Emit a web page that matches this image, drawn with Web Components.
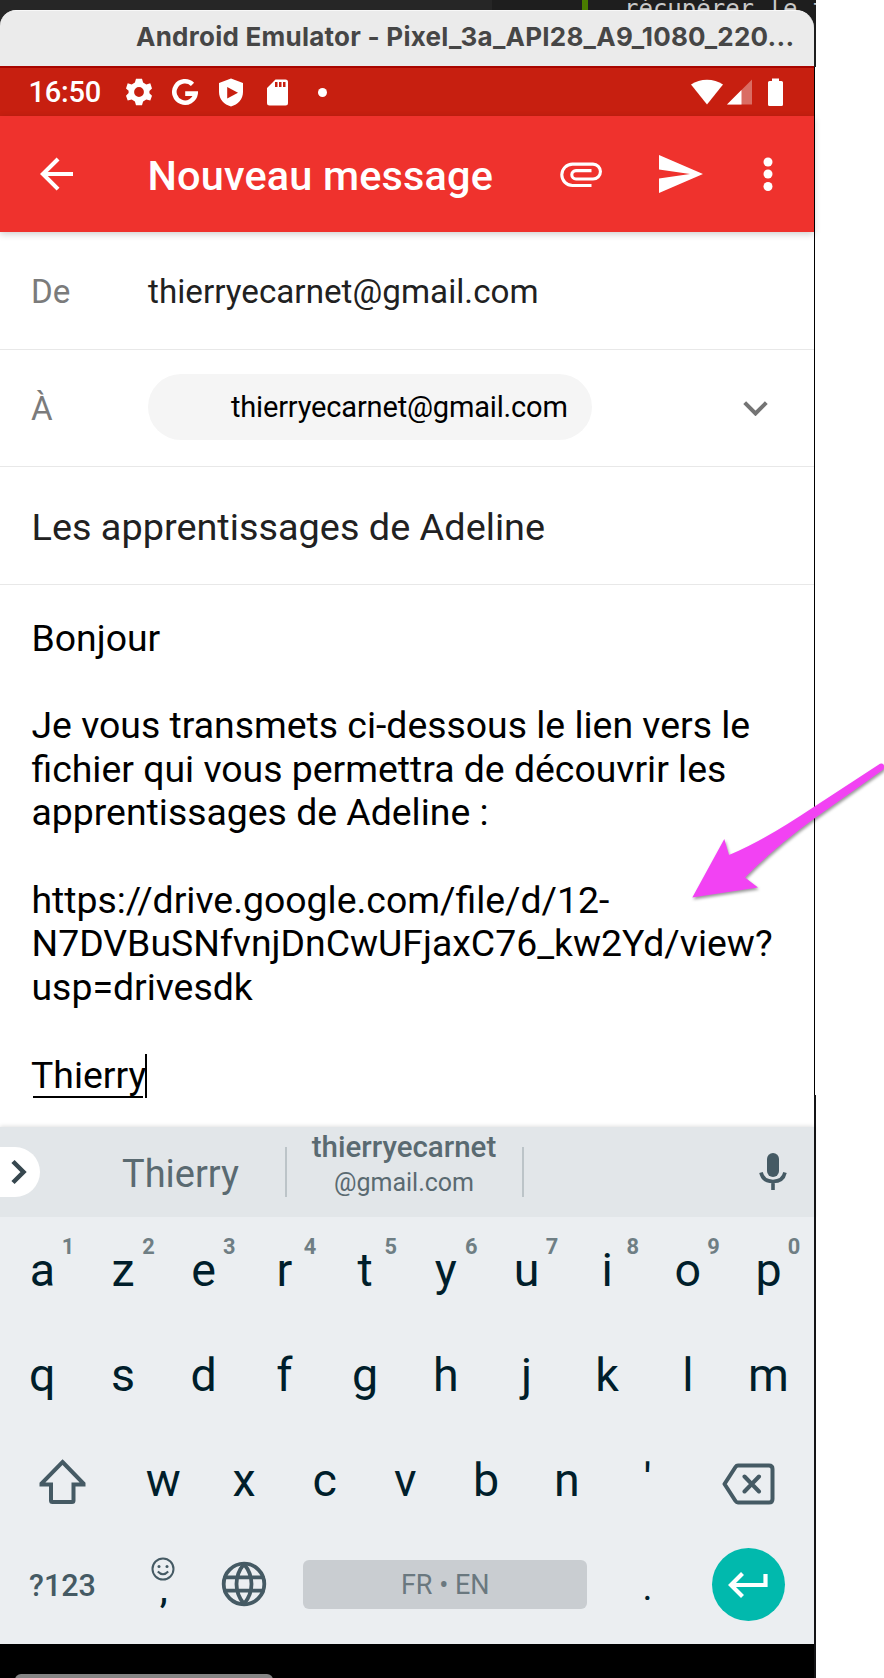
<!DOCTYPE html>
<html lang="fr">
<head>
<meta charset="utf-8">
<title>Nouveau message</title>
<style>
html,body{margin:0;background:#fff}
body{width:884px;height:1678px;overflow:hidden;font-family:Roboto,"Liberation Sans",sans-serif;position:relative}
</style>
</head>
<body>
<emulator-window></emulator-window>
<pointer-arrow></pointer-arrow>
<script>
const define = (name, html) => customElements.define(name, class extends HTMLElement {
  constructor() {
    super();
    this.attachShadow({ mode: 'open' }).innerHTML = '<style>*{box-sizing:border-box}svg{display:block;flex:none}</style>' + html;
  }
});

/* Editor strip that shows behind the window, and the window's title bar */
define('window-title', `<style>
:host{display:block;height:67px;width:816px;background:linear-gradient(90deg,#262626 492px,#1e1e1e 492px);overflow:hidden}
.behind{height:10px;display:flex;overflow:hidden;padding-left:582px}
.mark{width:6px;height:10px;background:#4a7d00;flex:none}
.code{font:24px/28px "DejaVu Sans Mono",monospace;color:#c9c9c9;white-space:pre;margin:-5px 0 0 36px}
.bar{width:814px;height:57px;background:#ebebeb;border-radius:16px 18px 0 0;border-top:1px solid #f8f8f8;padding:0 0 0 136px;font:bold 26px/51px Inter,sans-serif;letter-spacing:.25px;color:#464646;white-space:nowrap}
</style><div class="behind"><i class="mark"></i><span class="code">récupérer le f</span></div><div class="bar"><slot></slot></div>`);

define('status-bar', `<style>
:host{display:flex;width:814px;height:50px;background:#c71f10;border-top:2px solid #a80500;color:#fff;align-items:center;margin-top:-1px;padding:0 31px 0 28.5px;font-weight:500}
.t{font-size:29px;width:97.5px;letter-spacing:-.2px}
.grow{flex:1}
svg{fill:#fff}
</style><span class="t">16:50</span>
<svg width="26" height="28" viewBox="-13 -14 26 28"><path fill-rule="evenodd" d="M-3-13.3H3L4.1-9.4 7.3-7.5 11.3-8.7 13-3.6 10.4-1V1.2L13 3.8 11.3 8.6 7.3 7.5 4.1 9.4 3 13.3H-3L-4.1 9.4-7.3 7.5-11.3 8.6-13 3.8-10.4 1V-1.2L-13-3.6-11.3-8.7-7.3-7.5-4.1-9.4ZM0-4.9A4.9 4.9 0 1 0 0 4.9 4.9 4.9 0 1 0 0-4.9Z"/></svg>
<svg style="margin-left:20px" width="26" height="28" viewBox="-13 -14 26 28"><path style="fill:none;stroke:#fff;stroke-width:4.6" d="M7.5-7.7A10.7 10.7 0 1 0 10.6 1.6H0.2"/></svg>
<svg style="margin-left:21px" width="24" height="29" viewBox="0 0 24 29"><path fill-rule="evenodd" d="M12 .5L24 5V14C24 21 19 26.500 12 28.500 5 26.500 0 21 0 14V5ZM8.200 9V20.500L19 14.700Z"/></svg>
<svg style="margin-left:24px" width="21" height="27" viewBox="0 0 21 27"><path fill-rule="evenodd" d="M8.500 .5H18.500Q21 .5 21 3V24Q21 26.500 18.500 26.500H2.500Q0 26.500 0 24V9ZM8 3V8H10.500V3ZM12 3V8H14.500V3ZM16 3V8H18.500V3Z"/></svg>
<svg style="margin-left:30px" width="9" height="9"><circle cx="4.500" cy="4.500" r="4.500"/></svg>
<span class="grow"></span>
<svg width="32" height="26" viewBox="0 0 32 26"><path d="M0 5.500C9-1 23-1 32 5.500L16 25.500Z"/></svg>
<svg style="margin-left:4.5px" width="25" height="26" viewBox="0 0 25 26"><path opacity=".35" d="M25 .5V25.500H0Z"/><path d="M14.500 11V25.500H0Z"/></svg>
<svg style="margin-left:16px" width="15" height="28" viewBox="0 0 15 28"><path d="M4 .5H11V3H13.500Q15 3 15 4.500V26.500Q15 28 13.500 28H1.500Q0 28 0 26.500V4.500Q0 3 1.500 3H4Z"/></svg>`);

define('app-bar', `<style>
:host{display:flex;width:814px;height:116px;background:#ef322d;color:#fff;align-items:center;padding:0 41px 0 40px;box-shadow:0 2px 7px rgba(0,0,0,.2);position:relative}
.t{font-weight:500;font-size:41.45px;letter-spacing:.17px;flex:1;margin-left:74.5px;padding-top:4px;white-space:nowrap}
svg{fill:#fff}
</style>
<svg width="33" height="34" viewBox="0 0 33 34"><path d="M33 15V19H7.800L19.500 30.700 16.600 33.500 0 17 16.600 .5 19.500 3.400 7.800 15Z"/></svg>
<span class="t"><slot></slot></span>
<svg style="margin-top:2px" width="43" height="26" viewBox="0 0 43 26"><path fill="none" style="fill:none;stroke:#fff;stroke-width:3.100" d="M31.500 23.500H12.500A10.700 10.700 0 0 1 12.500 2.100H33A7.400 7.400 0 0 1 33 17H16A4.200 4.200 0 0 1 16 8.600H31.500"/></svg>
<svg style="margin-left:56px" width="44" height="38" viewBox="0 0 44 38"><path d="M0 0L44 19 0 38V23.500L31 19 0 14.500Z"/></svg>
<svg style="margin-left:60.5px" width="10" height="36"><circle cx="5" cy="6" r="4.500"/><circle cx="5" cy="18" r="4.500"/><circle cx="5" cy="30.500" r="4.500"/></svg>`);

define('field-row', `<style>
:host{display:flex;width:814px;height:117px;align-items:center;border-bottom:1px solid #e8e8e8;padding:0 46px 0 31px;font-size:33.16px;color:#212121}
.label{width:117px;flex:none;color:#7b7b7b}
.label,.v{padding-top:var(--drop,2px)}
.v{flex:1;display:block;letter-spacing:.04px}
</style><span class="label"><slot name="label"></slot></span><span class="v"><slot></slot></span><slot name="end"></slot>`);

define('contact-chip', `<style>
:host{display:inline-flex;width:444px;height:66px;background:#f5f5f5;border-radius:33px;align-items:center;padding-left:83px;font-size:29.02px;color:#000;vertical-align:middle;letter-spacing:-.18px;margin-top:-4px}
</style><slot></slot>`);

define('subject-line', `<style>
:host{display:flex;width:814px;height:118px;align-items:center;border-bottom:1px solid #e8e8e8;padding:3px 31px 0 31.5px;font-size:37.8px;letter-spacing:.02px;color:#212121}
</style><slot></slot>`);

define('message-body', `<style>
:host{display:block;width:814px;height:542px;padding:31.5px 30px 0 31.5px;font-size:37.38px;line-height:43.7px;color:#000;white-space:pre}
.w{display:inline-block;height:44px;margin-left:-.5px;width:116px;border-right:2px solid #000;background:linear-gradient(#000,#000) 2px 42px/110px 2.500px no-repeat}
</style><slot></slot><span class="w">Thierry</span>`);

define('suggestion-strip', `<style>
:host{display:grid;grid-template-columns:76px 211px 237px 234px 1fr;width:814px;height:91px;margin-bottom:-1px;background:#e2e6e9;color:#5a6a71;align-items:center;box-shadow:0 -1px 4px rgba(0,0,0,.12)}
.tab{width:40px;height:50px;margin-top:-1px;background:#fff;border-radius:0 25px 25px 0}
.s{height:50px;border-right:2px solid #bcc4c8;display:flex;flex-direction:column;align-items:center;justify-content:center;margin-top:-1px;white-space:nowrap}
.big{font-size:38px;line-height:44px;padding-top:4px}
.a{font-weight:500;font-size:29.5px;line-height:34px;margin-bottom:2px}
.b{font-size:25px;line-height:34px}
.two{padding:0 1px 14px 0}
svg{margin-top:-2px}
.tab svg{margin:0}
</style>
<div class="tab"><svg width="40" height="50"><path d="M13 14.500L23.500 25 13 35.500" fill="none" stroke="#37474f" stroke-width="4.500"/></svg></div>
<div class="s"><span class="big">Thierry</span></div>
<div class="s two"><span class="a">thierryecarnet</span><span class="b">@gmail.com</span></div>
<div></div>
<svg width="30" height="38" viewBox="0 0 30 38"><g transform="translate(1)"><rect x="8" width="12" height="24" rx="6" fill="#455a64"/><path d="M2 19.500Q4 28.500 14 28.500T26 19.500M14 29V37" fill="none" stroke="#455a64" stroke-width="3.600"/></g></svg>`);

define('letter-key', `<style>
:host{display:flex;align-items:center;justify-content:center;position:relative;font-size:46.6px;color:#001e2b}
.hint{position:absolute;top:15.5px;right:8.5px;font-size:21.8px;line-height:26px;font-weight:700;color:#6f7e84}
</style><slot></slot><span class="hint"><slot name="hint"></slot></span>`);

define('soft-keyboard', `<style>
:host{display:block;width:814px;height:427px;background:#ebeef1;padding:1px 5px 0 2px}
.row{display:grid;grid-template-columns:repeat(10,80.7px);height:104.500px}
.wide{grid-template-columns:121px repeat(7,80.7px) 121px;padding-top:1px;height:105px}
.last{grid-template-columns:121px 80.7px 80.7px 322.8px 80.7px 121px}
.c{display:flex;align-items:center;justify-content:center}
.mode{font-size:30.5px;font-weight:500;color:#455a64;padding-top:3px}
.comma{flex-direction:column;font-size:36px;font-weight:500;color:#001e2b;line-height:26px;padding-bottom:8px}
.comma span{margin:-4px 0 0 1px}
.dot{font-size:38px;padding-top:6px}
.space{width:284px;height:49px;border-radius:6px;background:#c9cdd1;color:#6a787f;font-size:27px;padding-top:2px;margin-right:1px}
.enter{width:73px;height:73px;border-radius:50%;background:#01b9ad}
svg.l{fill:none;stroke:#455a64;stroke-width:4;stroke-linejoin:round;stroke-linecap:round}
</style>
<div class="row" id="r1"></div><div class="row" id="r2"></div>
<div class="row wide">
<span class="c" style="padding-top:3px"><svg class="l" width="47" height="46" viewBox="0 0 47 46"><path d="M23.500 3L44.500 24.500V25.500H34.500V41.500Q34.500 43 33 43H13.500Q12 43 12 41.500V25.500H2.500V24.500Z" style="stroke-linejoin:miter"/></svg></span>
<letter-key>w</letter-key><letter-key>x</letter-key><letter-key>c</letter-key><letter-key>v</letter-key><letter-key>b</letter-key><letter-key>n</letter-key><letter-key>'</letter-key>
<span class="c" style="padding:8px 0 0 1px"><svg class="l" width="53" height="42" viewBox="0 0 53 42"><path d="M16 2.500H47Q50.500 2.500 50.500 6V36Q50.500 39.500 47 39.500H16Q14.500 39.500 13.500 38L2.500 21 13.500 4Q14.500 2.500 16 2.500ZM22.500 13.500L37 28.500M37 13.500L22.500 28.500"/></svg></span>
</div>
<div class="row last">
<span class="c mode">?123</span>
<span class="c comma"><svg width="24" height="24" viewBox="0 0 24 24" fill="none" stroke="#455a64" stroke-width="2"><circle cx="12" cy="12" r="10.500"/><circle cx="8" cy="9.500" r="1.500" fill="#455a64" stroke="none"/><circle cx="16" cy="9.500" r="1.500" fill="#455a64" stroke="none"/><path d="M6.800 14.500Q12 20 17.200 14.500"/></svg><span>,</span></span>
<span class="c" style="padding:0 1px 1px 0"><svg class="l" style="stroke-width:3.800" width="46" height="46" viewBox="-23 -23 46 46"><circle r="20.300"/><path d="M-19-6.700H19M-19 6.700H19M0-20C-10-8-10 8 0 20C10 8 10-8 0-20"/></svg></span>
<span class="c"><span class="c space">FR • EN</span></span>
<letter-key class="dot">.</letter-key>
<span class="c"><span class="c enter"><svg width="40" height="28" viewBox="0 0 40 28" style="margin-top:2px"><path d="M37.500 3V14H3M14.500 2.500L3 14 14.500 25.500" fill="none" stroke="#fff" stroke-width="4.200"/></svg></span></span>
</div>`);

/* Fills the two full letter rows of the keyboard */
const kb = customElements.get('soft-keyboard');
customElements.define('azerty-keyboard', class extends kb {
  connectedCallback() {
    const fill = (id, letters, hints) => {
      this.shadowRoot.getElementById(id).innerHTML = [...letters].map((l, i) =>
        `<letter-key>${l}${hints ? `<span slot="hint">${hints[i]}</span>` : ''}</letter-key>`).join('');
    };
    fill('r1', 'azertyuiop', '1234567890');
    fill('r2', 'qsdfghjklm');
  }
});

define('nav-area', `<style>
:host{display:flex;width:814px;height:34px;background:#000;padding:30px 0 0 15px;overflow:hidden}
i{width:258px;height:16px;border-radius:6px;background:#858585;flex:none}
</style><i></i>`);

define('emulator-window', `<style>
:host{display:block;width:816px;height:1678px}
.screen{display:flex;flex-direction:column;width:816px;height:1611px;background:linear-gradient(#000,#000) 814px 0/1px 1028px no-repeat,linear-gradient(#141416,#141416) 814px 1028px/2px 100% no-repeat,#fff}
.screen>*{flex:none}
</style>
<window-title>Android Emulator - Pixel_3a_API28_A9_1080_220...</window-title>
<div class="screen">
<status-bar></status-bar>
<app-bar>Nouveau message</app-bar>
<field-row style="height:118px"><span slot="label">De</span>thierryecarnet@gmail.com</field-row>
<field-row style="--drop:1px"><span slot="label">À</span><contact-chip>thierryecarnet@gmail.com</contact-chip><svg slot="end" width="25" height="15" viewBox="0 0 25 15"><path d="M1.700 1.700L12.500 12.500 23.300 1.700" fill="none" stroke="#747474" stroke-width="4"/></svg></field-row>
<subject-line>Les apprentissages de Adeline</subject-line>
<message-body>Bonjour

Je vous transmets ci-dessous le lien vers le
fichier qui vous permettra de découvrir les
apprentissages de Adeline :

https://drive.google.com/file/d/12-
N7DVBuSNfvnjDnCwUFjaxC76_kw2Yd/view?
usp=drivesdk

</message-body>
<suggestion-strip></suggestion-strip>
<azerty-keyboard></azerty-keyboard>
<nav-area></nav-area>
</div>`);

/* Annotation arrow laid over the window */
define('pointer-arrow', `<style>
:host{position:absolute;left:684px;top:756px;width:200px;height:150px;overflow:hidden}
path{filter:drop-shadow(1px 2px 1.500px rgba(0,0,0,.4))}
</style><svg width="200" height="150" viewBox="684 756 200 150"><path fill="#f242f3" d="M692.300 897.500L724.300 839 729 855Q760 842 800 816L880 763.800Q883 762.500 884 765.500 885 768.500 882 770.500L815 818Q775 847 745 877.500L758 887.500Z"/></svg>`);
</script>
</body>
</html>
